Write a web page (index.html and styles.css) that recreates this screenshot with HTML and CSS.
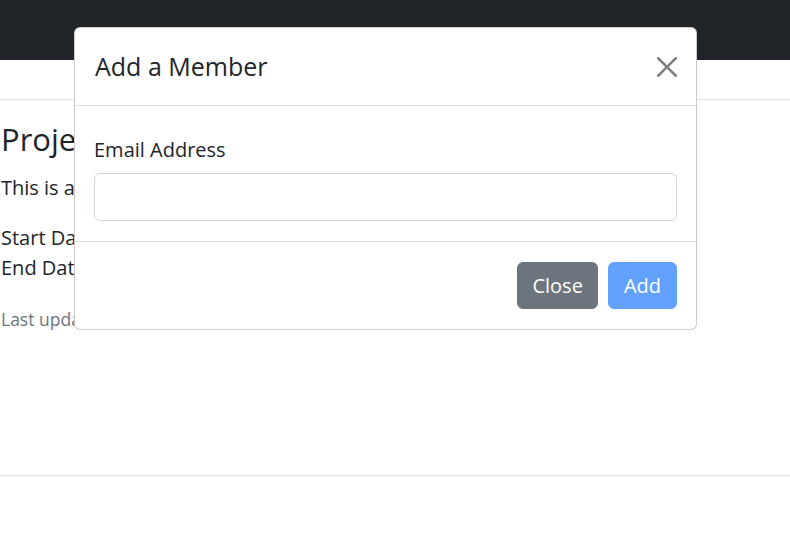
FILE: index.html
```html
<!DOCTYPE html>
<html lang="en">
<head>
<meta charset="utf-8">
<title>Project</title>
<link rel="stylesheet" href="styles.css">
</head>
<body>
<nav class="navbar"></nav>
<div class="subbar"></div>
<main class="content">
  <h3 class="title">Project Alpha</h3>
  <p>This is a sample project.</p>
  <p>Start Date: 2023-01-01<br>End Date: 2023-12-31</p>
  <p class="muted"><small>Last updated 3 mins ago</small></p>
</main>
<footer class="footer"></footer>

<div class="modal">
  <div class="modal-header">
    <h5 class="modal-title">Add a Member</h5>
    <button class="btn-close" type="button" aria-label="Close">
      <svg viewBox="0 0 16 16" width="20" height="20"><path d="M.293.293a1 1 0 0 1 1.414 0L8 6.586 14.293.293a1 1 0 1 1 1.414 1.414L9.414 8l6.293 6.293a1 1 0 0 1-1.414 1.414L8 9.414l-6.293 6.293a1 1 0 0 1-1.414-1.414L6.586 8 .293 1.707a1 1 0 0 1 0-1.414z"/></svg>
    </button>
  </div>
  <div class="modal-body">
    <label class="form-label" for="email">Email Address</label>
    <input class="form-control" id="email" type="email">
  </div>
  <div class="modal-footer">
    <button class="btn btn-secondary" type="button">Close</button>
    <button class="btn btn-primary" type="button" disabled>Add</button>
  </div>
</div>
</body>
</html>
```

FILE: styles.css
```css
* { box-sizing: border-box; }
html, body { margin: 0; padding: 0; }
body {
  font-family: "Open Sans", "Noto Sans", sans-serif;
  font-size: 20px;
  line-height: 1.5;
  color: #212529;
  background: #fff;
  width: 790px;
  height: 560px;
  overflow: hidden;
}
.navbar {
  height: 60px;
  background: #212529;
}
.subbar {
  height: 40px;
  border-bottom: 1px solid #dee2e6;
}
.content {
  padding: 21px 0 0 1px;
  height: 375px;
}
.title {
  font-size: 31px;
  font-weight: 500;
  line-height: 1.2;
  margin: 0 0 15px;
}
.content p { margin: 0 0 20px; }
.muted { color: #6c757d; padding-top: 1px; }
.muted small { font-size: 17.5px; }
.footer {
  border-top: 1px solid #dee2e6;
}

.modal {
  position: absolute;
  left: 74px;
  top: 27px;
  width: 623px;
  background: #fff;
  border: 1px solid rgba(0,0,0,.2);
  border-radius: 6px;
}
.modal-header {
  display: flex;
  align-items: center;
  justify-content: space-between;
  height: 78px;
  padding: 0 18px 0 20px;
  border-bottom: 1px solid #dee2e6;
}
.modal-title {
  margin: 0;
  font-size: 25px;
  font-weight: 500;
  line-height: 37px;
}
.btn-close {
  border: 0;
  background: transparent;
  padding: 0;
  width: 22px;
  height: 22px;
  display: flex;
  align-items: center;
  justify-content: center;
  opacity: .5;
}
.btn-close svg { fill: #000; display: block; }
.modal-body {
  padding: 29px 19px 20px;
}
.form-label {
  display: block;
  margin-bottom: 8px;
}
.form-control {
  display: block;
  width: 100%;
  height: 48px;
  border: 1px solid #ced4da;
  border-radius: 6px;
  font: inherit;
  padding: 7px 15px;
  background: #fff;
}
.modal-footer {
  display: flex;
  justify-content: flex-end;
  gap: 10px;
  padding: 20px 19px;
  border-top: 1px solid #dee2e6;
}
.btn {
  font: inherit;
  height: 47px;
  padding: 0 15px;
  border: 1px solid transparent;
  border-radius: 6px;
  color: #fff;
}
.btn-secondary { background: #6c757d; border-color: #6c757d; padding: 0 14px; }
.btn-primary { background: #62a1fe; border-color: #62a1fe; }
```
